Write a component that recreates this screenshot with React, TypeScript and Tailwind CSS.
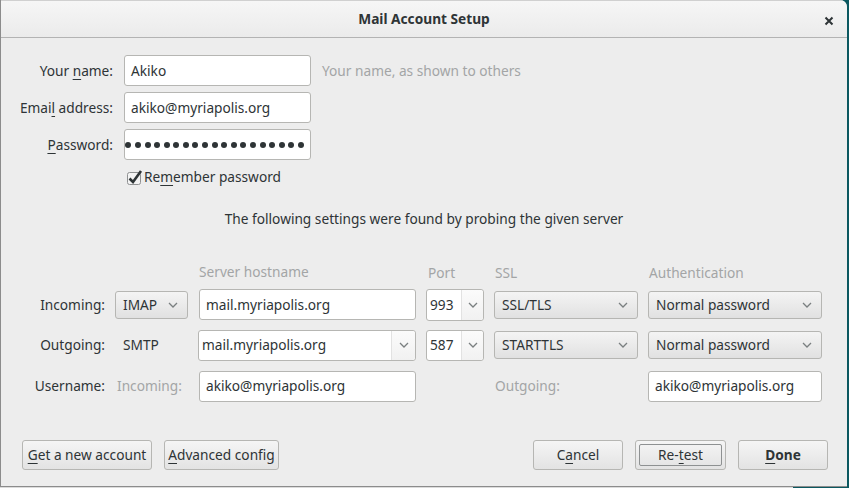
import React from 'react';

const Chevron = () => (
  <svg width="10" height="6" viewBox="0 0 10 6" className="shrink-0">
    <polyline points="1,1 5,5 9,1" fill="none" stroke="#7a7f80" strokeWidth="1.3" />
  </svg>
);

const U = ({ children }: { children: React.ReactNode }) => <span className="underline underline-offset-[3px]">{children}</span>;

const TextField = ({ value, className = '' }: { value: string; className?: string }) => (
  <div className={`h-[31px] flex items-center px-[6px] bg-white border border-[#b6b6b3] rounded-[3px] text-[#2e3436] ${className}`}>
    {value}
  </div>
);

const DropButton = ({ value, className = '' }: { value: string; className?: string }) => (
  <div className={`h-[28px] flex items-center justify-between pl-[7px] pr-[9px] rounded-[3px] border border-[#b6b6b3] bg-gradient-to-b from-[#f4f4f4] to-[#e1e1e1] text-[#2e3436] ${className}`}>
    <span>{value}</span>
    <Chevron />
  </div>
);

const Combo = ({ value, arrowW, className = '' }: { value: string; arrowW: string; className?: string }) => (
  <div className={`h-[31px] flex items-stretch bg-white border border-[#b6b6b3] rounded-[3px] text-[#2e3436] ${className}`}>
    <div className="flex-1 flex items-center pl-[3px] overflow-hidden">{value}</div>
    <div className={`${arrowW} flex items-center justify-center border-l border-[#e2e2e2] bg-gradient-to-b from-[#fbfbfb] to-[#f1f1f1] rounded-r-[3px]`}>
      <Chevron />
    </div>
  </div>
);

const Button = ({ children, className = '', focus = false }: { children: React.ReactNode; className?: string; focus?: boolean }) => (
  <div className={`h-[30px] flex items-center justify-center rounded-[3px] border border-[#b6b6b3] bg-gradient-to-b from-[#f5f5f5] to-[#e3e3e3] text-[#2e3436] ${className}`}>
    {focus ? (
      <div className="m-[3px] flex-1 self-stretch flex items-center justify-center border border-[#8e9192] rounded-[2px]">{children}</div>
    ) : (
      children
    )}
  </div>
);

export default function App() {
  const dots = Array.from({ length: 20 });
  return (
    <div className="relative w-[849px] h-[488px] bg-[#dcdcdc] overflow-hidden font-['Noto_Sans',sans-serif] text-[13.7px] leading-none">
      {/* desktop behind */}
      <div className="absolute right-0 top-0 w-[56px] h-full bg-[#0b5860]" />

      <div className="absolute left-0 top-0 w-[847px] h-[487px] flex flex-col bg-[#ededed] border-l border-b border-[#8c8c8c] rounded-tr-[7px] overflow-hidden">
        {/* title bar */}
        <div className="h-[38px] shrink-0 relative flex items-center justify-center border-b border-[#b3b3b3] bg-gradient-to-b from-[#f6f6f6] to-[#ebebeb] border-t border-t-[#d0d0d0]">
          <span className="font-bold text-[#2e3436]">Mail Account Setup</span>
          <svg width="10" height="10" viewBox="0 0 10 10" className="absolute right-[13px] top-[15px]">
            <path d="M1.5 1.5 L8.5 8.5 M8.5 1.5 L1.5 8.5" stroke="#2e3436" strokeWidth="2" />
          </svg>
        </div>

        {/* identity */}
        <div className="mt-[17px] grid grid-cols-[112px_187px_auto] gap-x-[11px] gap-y-[6px] items-center text-[#2e3436]">
          <div className="text-right">Your <U>n</U>ame:</div>
          <TextField value="Akiko" />
          <div className="text-[#a3a5a6]">Your name, as shown to others</div>

          <div className="text-right">Emai<U>l</U> address:</div>
          <TextField value="akiko@myriapolis.org" />
          <div />

          <div className="text-right"><U>P</U>assword:</div>
          <div className="h-[31px] flex items-center justify-end pr-[6px] gap-[3.6px] bg-white border border-[#b6b6b3] rounded-[3px] overflow-hidden">
            {dots.map((_, i) => (
              <span key={i} className="w-[6px] h-[6px] shrink-0 rounded-full bg-[#2e3436]" />
            ))}
          </div>
          <div />
        </div>

        <div className="mt-[9px] ml-[125px] flex items-center text-[#2e3436]">
          <svg width="17" height="16" viewBox="0 0 17 16" className="shrink-0">
            <rect x="1.5" y="3.5" width="13" height="12" rx="2" fill="#f3f3f3" stroke="#8f9192" />
            <path d="M3.5 9.5 L7 13 L15 2" fill="none" stroke="#2e3436" strokeWidth="2.6" />
          </svg>
          <span className="ml-[1px]">Re<U>m</U>ember password</span>
        </div>

        <div className="mt-[27px] text-center text-[#2e3436]">The following settings were found by probing the given server</div>

        {/* server grid */}
        <div className="mt-[39px] ml-[1px] grid grid-cols-[103px_73px_218px_58px_144px_174px] gap-x-[10px] items-center text-[#2e3436]">
          <div />
          <div />
          <div className="pl-[1px] text-[#a3a5a6] h-[16px]">Server hostname</div>
          <div className="pl-[2px] text-[#a3a5a6]">Port</div>
          <div className="pl-[1px] text-[#a3a5a6]">SSL</div>
          <div className="pl-[1px] text-[#a3a5a6]">Authentication</div>

          <div className="mt-[8px] text-right">Incoming:</div>
          <DropButton value="IMAP" className="mt-[8px]" />
          <TextField value="mail.myriapolis.org" className="mt-[8px] ml-[1px]" />
          <Combo value="993" arrowW="w-[22px]" className="mt-[8px] h-[32px]" />
          <DropButton value="SSL/TLS" className="mt-[8px]" />
          <DropButton value="Normal password" className="mt-[8px]" />

          <div className="mt-[9px] text-right">Outgoing:</div>
          <div className="mt-[9px] pl-[8px]">SMTP</div>
          <Combo value="mail.myriapolis.org" arrowW="w-[24px]" className="mt-[9px]" />
          <Combo value="587" arrowW="w-[22px]" className="mt-[9px]" />
          <DropButton value="STARTTLS" className="mt-[9px]" />
          <DropButton value="Normal password" className="mt-[9px]" />

          <div className="mt-[10px] text-right">Username:</div>
          <div className="mt-[10px] pl-[2px] text-[#a3a5a6]">Incoming:</div>
          <TextField value="akiko@myriapolis.org" className="mt-[10px] ml-[1px]" />
          <div className="mt-[10px]" />
          <div className="mt-[10px] pl-[1px] text-[#a3a5a6]">Outgoing:</div>
          <TextField value="akiko@myriapolis.org" className="mt-[10px]" />
        </div>

        {/* buttons */}
        <div className="mt-auto mb-[16px] flex items-center pl-[21px] pr-[19px]">
          <Button className="w-[130px]"><span><U>G</U>et a new account</span></Button>
          <Button className="ml-[12px] w-[115px]"><span><U>A</U>dvanced config</span></Button>
          <div className="flex-1" />
          <Button className="w-[90px]"><span>C<U>a</U>ncel</span></Button>
          <Button className="ml-[12px] w-[91px]" focus><span>Re-<U>t</U>est</span></Button>
          <Button className="ml-[12px] w-[90px] font-bold"><span><U>D</U>one</span></Button>
        </div>
      </div>
    </div>
  );
}
